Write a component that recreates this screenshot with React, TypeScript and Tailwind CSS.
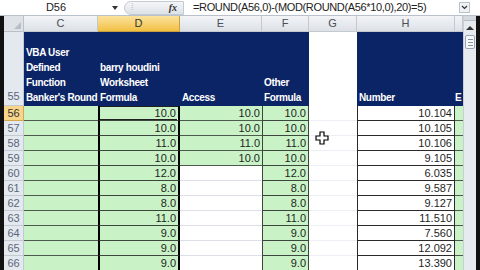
import React from 'react'

const navy = 'bg-[#0b2466]'
const green = 'bg-[#c9f3c6]'

const rows = [
  { n: 56, d: '10.0', e: '10.0', f: '10.0', h: '10.104' },
  { n: 57, d: '10.0', e: '10.0', f: '10.0', h: '10.105' },
  { n: 58, d: '11.0', e: '11.0', f: '11.0', h: '10.106' },
  { n: 59, d: '10.0', e: '10.0', f: '10.0', h: '9.105' },
  { n: 60, d: '12.0', e: '', f: '12.0', h: '6.035' },
  { n: 61, d: '8.0', e: '', f: '8.0', h: '9.587' },
  { n: 62, d: '8.0', e: '', f: '8.0', h: '9.127' },
  { n: 63, d: '11.0', e: '', f: '11.0', h: '11.510' },
  { n: 64, d: '9.0', e: '', f: '9.0', h: '7.560' },
  { n: 65, d: '9.0', e: '', f: '9.0', h: '12.092' },
  { n: 66, d: '9.0', e: '', f: '9.0', h: '13.390' },
]

const colHeads = ['C', 'D', 'E', 'F', 'G', 'H', '']

const FormulaBar: React.FC = () => (
  <div className="flex h-[16px] items-center bg-white border-b border-[#b9c2cc] text-[11px] text-[#222]">
    <div className="w-[112px] text-center">D56</div>
    <svg width="6" height="4" viewBox="0 0 6 4" className="mr-[6px]">
      <path d="M0 0h6L3 4z" fill="#333" />
    </svg>
    <div className="flex items-center justify-between w-[60px] h-[14px] rounded-l-full bg-gradient-to-b from-[#f4f6f8] to-[#dde2e8] border border-[#c4cad2] px-[6px]">
      <span className="text-[9px] text-[#b0b6be]">⁞</span>
      <span className="italic font-bold text-[10px] text-[#333] font-['Liberation_Serif',serif]">fx</span>
    </div>
    <div className="flex-1 pl-[9px] tracking-[-0.35px]">=ROUND(A56,0)-(MOD(ROUND(A56*10,0),20)=5)</div>
    <div className="w-[11px] h-[11px] mr-[10px] border border-[#b9c2cc] bg-[#eef1f5] flex items-center justify-center">
      <svg width="7" height="5" viewBox="0 0 7 5">
        <path d="M1 1l2.5 2.5L6 1" stroke="#333" strokeWidth="1.2" fill="none" />
      </svg>
    </div>
  </div>
)

const Scrollbar: React.FC = () => (
  <div className="w-[13px] h-[254px] bg-[#e7eaee] border-l border-[#c9ced5] flex flex-col items-center">
    <div className="w-full h-[5px] bg-[#d4d9df] border-b border-[#b5bcc5]" />
    <svg width="8" height="6" viewBox="0 0 8 6" className="mt-[4px]">
      <path d="M0 5l4-4 4 4z" fill="#333" />
    </svg>
    <div className="mt-[4px] w-[10px] h-[14px] rounded-[2px] border border-[#9aa4b0] bg-[#f7f8fa] flex flex-col items-center justify-center gap-[2px]">
      <div className="w-[5px] h-px bg-[#8a94a0]" />
      <div className="w-[5px] h-px bg-[#8a94a0]" />
      <div className="w-[5px] h-px bg-[#8a94a0]" />
    </div>
  </div>
)

const HeadText: React.FC<{ lines: string[] }> = ({ lines }) => (
  <div className="flex h-full flex-col justify-end pl-[2px] pb-[1px] text-white font-bold text-[10px] tracking-[-0.35px] leading-[15px] whitespace-nowrap overflow-hidden">
    {lines.map((l) => (
      <div key={l}>{l}</div>
    ))}
  </div>
)

const num = 'flex items-center justify-end pr-[2px] text-[11px] text-[#1e1e1e] overflow-hidden'

export default function App() {
  return (
    <div className="w-[480px] h-[270px] overflow-hidden bg-white relative font-['Liberation_Sans',sans-serif]">
      <FormulaBar />
      <div className="flex">
        <div className="w-[4px] h-[254px] bg-[#111]" />
        <div className="grid grid-cols-[20px_74px_82px_82px_47px_48px_98px_8px] grid-rows-[16px_74px_repeat(11,15px)]">
          {/* column headers */}
          <div className="bg-[#dfe3e8] border-r border-b border-[#b9c0c9] relative">
            <div className="absolute right-[2px] bottom-[2px] w-0 h-0 border-l-[7px] border-l-transparent border-b-[7px] border-b-[#b8bec6]" />
          </div>
          {colHeads.map((c) => (
            <div
              key={c + 'h'}
              className={
                c === 'D'
                  ? 'flex items-center justify-center text-[11px] text-[#333] bg-gradient-to-b from-[#fbe39a] to-[#f2c040] border-r border-b border-[#c8a040]'
                  : 'flex items-center justify-center text-[11px] text-[#4a4f57] bg-gradient-to-b from-[#f2f4f7] to-[#dde1e6] border-r border-b border-[#c3c9d1]'
              }
            >
              {c}
            </div>
          ))}

          {/* row 55: tall header row */}
          <div className="flex items-end justify-center pb-[1px] text-[11px] text-[#5a6678] bg-[#e4e9f0] border-r border-b border-[#c3c9d1]">55</div>
          <div className={navy}>
            <HeadText lines={['VBA User', 'Defined', 'Function', "Banker's Round"]} />
          </div>
          <div className={navy}>
            <HeadText lines={['barry houdini', 'Worksheet', 'Formula']} />
          </div>
          <div className={navy}>
            <HeadText lines={['Access']} />
          </div>
          <div className={navy}>
            <HeadText lines={['Other', 'Formula']} />
          </div>
          <div className="bg-white" />
          <div className={navy}>
            <HeadText lines={['Number']} />
          </div>
          <div className={navy + ' overflow-hidden'}>
            <div className="flex h-full items-end pb-[1px] text-white font-bold text-[10px] leading-[15px]">E</div>
          </div>

          {/* data rows */}
          {rows.map((r) => (
            <React.Fragment key={r.n}>
              <div
                className={
                  r.n === 56
                    ? 'flex items-center justify-center text-[11px] text-[#333] bg-[#f8d58a] border-r border-b border-[#d2a850]'
                    : 'flex items-center justify-center text-[11px] text-[#5a6678] bg-[#e4e9f0] border-r border-b border-[#c3c9d1]'
                }
              >
                {r.n}
              </div>
              <div className={green + ' border-b border-[#4d5a4d]'} />
              <div className={num + ' ' + green + ' relative border-l-2 border-r-2 border-b border-l-black border-r-black border-b-[#3d463d]'}>
                {r.d}
                {r.n === 56 && (
                  <>
                    <div className="absolute -left-[2px] -top-px -right-[2px] -bottom-px border-2 border-[#202020]" />
                    <div className="absolute -right-[4px] -bottom-[3px] w-[5px] h-[5px] bg-black border border-white" />
                  </>
                )}
              </div>
              <div className={num + ' ' + (r.e ? green + ' border-b border-[#4d5a4d]' : 'bg-white border-b border-[#dde1e7]')}>{r.e}</div>
              <div className={num + ' ' + green + ' border-l border-r border-b border-[#3d463d]'}>{r.f}</div>
              <div className="bg-white border-b border-[#eceff3]" />
              <div className={num + ' bg-white border-l border-r border-b border-[#2a2a2a]'}>{r.h}</div>
              <div className={green + ' border-b border-[#4d5a4d]'} />
            </React.Fragment>
          ))}
        </div>
        <Scrollbar />
        <div className="w-[4px] h-[254px] bg-[#111]" />
      </div>

      {/* mouse cursor */}
      <svg width="14" height="14" viewBox="0 0 14 14" className="absolute left-[315px] top-[131px]">
        <path d="M5 1h4v4h4v4H9v4H5V9H1V5h4z" fill="#fff" stroke="#000" strokeWidth="1.2" />
      </svg>
    </div>
  )
}
